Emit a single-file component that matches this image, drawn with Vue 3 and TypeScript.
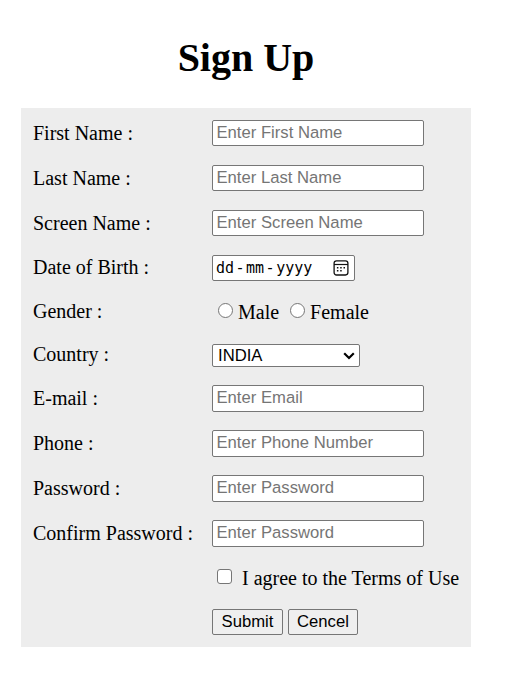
<script setup lang="ts">
import { ref } from 'vue'

interface Field {
  id: string
  label: string
  kind: 'text' | 'password' | 'date' | 'gender' | 'country'
  placeholder?: string
}

const fields: Field[] = [
  { id: 'first', label: 'First Name :', kind: 'text', placeholder: 'Enter First Name' },
  { id: 'last', label: 'Last Name :', kind: 'text', placeholder: 'Enter Last Name' },
  { id: 'screen', label: 'Screen Name :', kind: 'text', placeholder: 'Enter Screen Name' },
  { id: 'dob', label: 'Date of Birth :', kind: 'date' },
  { id: 'gender', label: 'Gender :', kind: 'gender' },
  { id: 'country', label: 'Country :', kind: 'country' },
  { id: 'email', label: 'E-mail :', kind: 'text', placeholder: 'Enter Email' },
  { id: 'phone', label: 'Phone :', kind: 'text', placeholder: 'Enter Phone Number' },
  { id: 'password', label: 'Password :', kind: 'password', placeholder: 'Enter Password' },
  { id: 'confirm', label: 'Confirm Password :', kind: 'password', placeholder: 'Enter Password' },
]

const gender = ref('')
const country = ref('INDIA')
const agreed = ref(false)
</script>

<template>
  <main class="page">
    <h1 class="title">Sign Up</h1>
    <form class="panel" @submit.prevent>
      <div v-for="f in fields" :key="f.id" class="row" :class="[f.kind, f.id]">
        <label class="label" :for="f.id">{{ f.label }}</label>

        <div v-if="f.kind === 'date'" :id="f.id" class="date-box">
          <span class="part">dd</span><span class="sep">-</span><span class="part">mm</span><span class="sep">-</span><span class="part">yyyy</span>
          <svg class="calendar" width="16" height="16" viewBox="0 0 16 16">
            <rect x="1.100" y="0.800" width="13.800" height="14.200" rx="2.400" fill="none" stroke="#111" stroke-width="1.300" />
            <path d="M1 4.500H15" stroke="#111" stroke-width="1.200" />
            <path d="M3.900 7h1.500v1.500H3.900zM7.200 7h1.500v1.500H7.200zM10.500 7h1.500v1.500h-1.500zM3.900 9.900h1.500v1.500H3.900zM7.200 9.900h1.500v1.500H7.200z" fill="#111" />
          </svg>
        </div>

        <div v-else-if="f.kind === 'gender'" :id="f.id" class="choices">
          <label class="choice"><input v-model="gender" class="radio" type="radio" name="gender" value="male" />Male</label>
          <label class="choice"><input v-model="gender" class="radio" type="radio" name="gender" value="female" />Female</label>
        </div>

        <div v-else-if="f.kind === 'country'" class="select-box">
          <select :id="f.id" v-model="country" class="select">
            <option>INDIA</option>
          </select>
          <svg class="chevron" width="12" height="8" viewBox="0 0 12 8">
            <path d="M1.200 1.300L6 6L10.800 1.300" fill="none" stroke="#000" stroke-width="2.200" />
          </svg>
        </div>

        <input v-else :id="f.id" class="input" :type="f.kind" :placeholder="f.placeholder" />
      </div>

      <div class="row agree">
        <span></span>
        <label class="terms"><input v-model="agreed" class="checkbox" type="checkbox" />I agree to the Terms of Use</label>
      </div>
      <div class="row actions">
        <span></span>
        <div class="buttons">
          <button class="button submit" type="submit">Submit</button>
          <button class="button cancel" type="reset">Cencel</button>
        </div>
      </div>
    </form>
  </main>
</template>

<style>
body {
  background: #fff;
}
</style>

<style scoped>
.page {
  box-sizing: border-box;
  width: 518px;
  height: 681px;
  padding: 35px 0 0 21px;
  overflow: hidden;
  font-family: "Liberation Serif", "Times New Roman", serif;
  font-size: 20px;
  color: #000;
}
.title {
  width: 450px;
  margin: 0 0 27px;
  font-size: 40px;
  line-height: 46px;
  font-weight: bold;
  text-align: center;
}
.panel {
  box-sizing: border-box;
  width: 450px;
  height: 539px;
  padding: 12px;
  background: #ededed;
}
.row {
  display: grid;
  grid-template-columns: 179px 1fr;
  align-items: start;
  height: 45px;
}
.row.gender { height: 44px; }
.row.country { height: 41px; }
.row.agree { height: 44px; }
.row.actions { height: 26px; }
.label {
  padding-top: 3px;
  line-height: 20px;
  white-space: nowrap;
}
.date .label { padding-top: 2px; }
.gender .label { padding-top: 1px; }
.country .label { padding-top: 0; }
.input,
.date-box,
.select,
.button {
  box-sizing: border-box;
  margin: 0;
  border: 1px solid #767676;
  border-radius: 2px;
  background: #fff;
  color: #000;
  font-family: "Liberation Sans", Arial, sans-serif;
  font-size: 16.667px;
}
.input {
  width: 212px;
  height: 26px;
  padding: 0 3.500px;
  outline: none;
}
.email .input,
.phone .input,
.password .input {
  height: 27px;
  padding-bottom: 2px;
}
.input::placeholder {
  color: #757575;
  opacity: 1;
}
.date-box {
  display: flex;
  align-items: center;
  width: 143px;
  height: 26px;
  padding: 0 5px 0 3px;
  font-family: "DejaVu Sans Mono", monospace;
  font-size: 15px;
}
.sep {
  width: 12px;
  text-align: center;
}
.calendar {
  margin-left: auto;
}
.choices {
  display: flex;
  gap: 11px;
  padding: 2px 0 0 6px;
}
.choice,
.terms {
  display: flex;
  align-items: flex-start;
  line-height: 20px;
  white-space: nowrap;
}
.radio,
.checkbox {
  appearance: none;
  box-sizing: border-box;
  flex: none;
  width: 15px;
  height: 15px;
  margin: 1px 5px 0 0;
  border: 1px solid #767676;
  background: #fff;
}
.radio { border-radius: 50%; }
.checkbox {
  margin-right: 10px;
  border-radius: 3px;
}
.radio:checked { box-shadow: inset 0 0 0 3px #fff; background: #0075ff; }
.checkbox:checked { background: #0075ff; }
.select-box {
  position: relative;
  width: 148px;
  height: 23px;
}
.select {
  appearance: none;
  display: block;
  width: 148px;
  height: 23px;
  padding: 0 5px;
}
.chevron {
  position: absolute;
  top: 8px;
  right: 5px;
  pointer-events: none;
}
.terms {
  padding: 3px 0 0 5px;
}
.buttons {
  display: flex;
  gap: 5px;
}
.button {
  height: 26px;
  padding: 0 0 1px;
  background: #efefef;
}
.submit { width: 71px; }
.cancel { width: 70px; }
</style>
